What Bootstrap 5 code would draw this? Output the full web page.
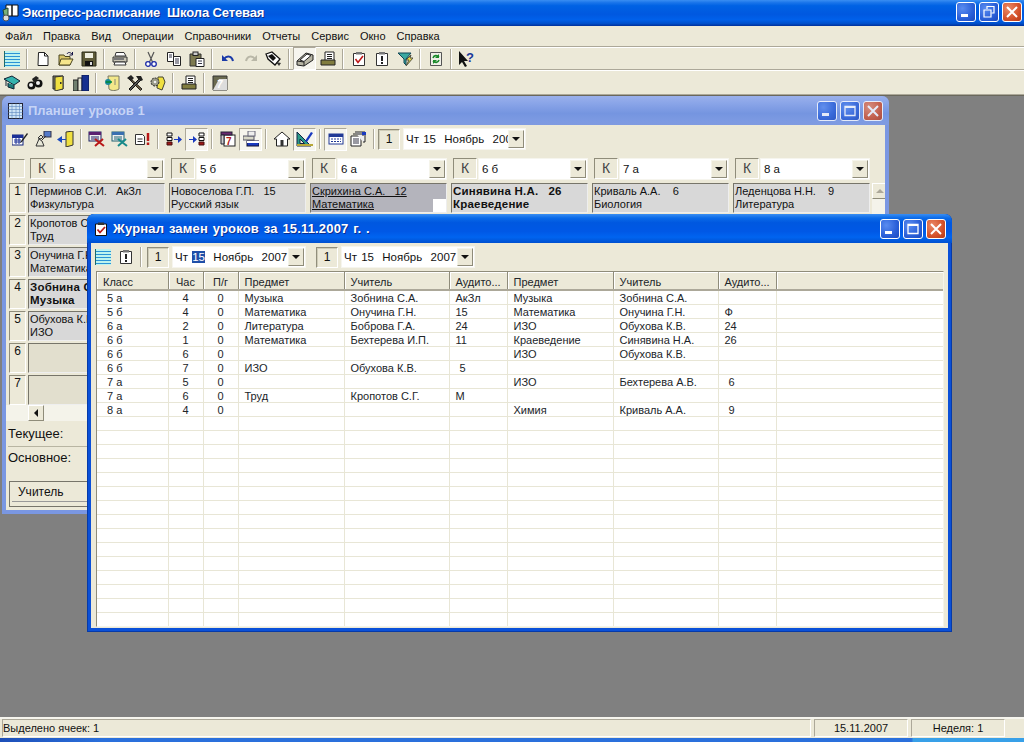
<!DOCTYPE html>
<html lang="ru">
<head>
<meta charset="utf-8">
<title>Экспресс-расписание</title>
<link href="https://cdn.jsdelivr.net/npm/bootstrap@5.3.0/dist/css/bootstrap.min.css" rel="stylesheet">
<style>
html,body{height:742px;overflow:hidden}
body{font:11px/14px "Liberation Sans",Arial,sans-serif;color:#111;background:#ece9d8}
.app{height:742px}
.apptitle{height:26px;background:linear-gradient(#3a8ef2 0,#1a75ea 10%,#0062e4 22%,#0058e0 55%,#0060ea 75%,#0050cc 90%,#00309a 100%);color:#fff;font-weight:700;font-size:13px;letter-spacing:-.12px;text-shadow:1px 1px 0 #0a2f90;white-space:pre}
.apptitle svg{margin:0 2px 0 2px}
.appbtns{padding-right:2px;margin-bottom:2px}
.menubar{height:21px;padding-left:5px;gap:11px;font-size:11px;border-bottom:1px solid #aca899}
.tbar{height:23px;border-top:1px solid #fff;border-bottom:1px solid #aca899}
.tbar+.tbar{height:25px}
.tbar.wtb{height:28px;border:0;padding-left:2px}
.tbar.wtb2{height:28px;padding-left:0}
.tbtn{width:23px;height:23px;flex:none;display:flex;align-items:center;justify-content:center}
.tbtn.on{background:#f6f5ee;border:1px solid;border-color:#aca899 #fff #fff #aca899}
.tsep{width:8px;height:20px;flex:none;display:flex;justify-content:center}
.tsep::before{content:"";width:2px;height:100%;border-left:1px solid #aca899;border-right:1px solid #fff}
.desktop{flex:1 1 auto;background:#808080;border-top:1px solid #6a685c;overflow:hidden}
.wnd{position:absolute;border-radius:7px 7px 0 0;padding:0 4px 4px}
.w1{left:2px;top:0;width:887px;height:418px;background:#7a97e2}
.w2{left:87px;top:118px;width:865px;height:418px;background:#0a50d8;box-shadow:inset 0 0 0 1px #063aa8}
.wt{margin:0 -4px;padding:0 6px;font-weight:700;font-size:13px;border-radius:7px 7px 0 0}
.w1 .wt{height:29px;background:linear-gradient(#9ab0ec 0,#8aa5e8 25%,#7595e0 60%,#7c9ae2 85%,#7f9ae0);color:#c6d4f6}
.w2 .wt{height:29px;letter-spacing:.17px;word-spacing:1px;background:linear-gradient(#3a8ef2 0,#0a6ae8 14%,#0058e0 30%,#0058e6 60%,#0064f0 80%,#0050d0 100%);color:#fff;text-shadow:1px 1px 0 #0a2f90}
.wtico{margin:0 5px 0 1px}
.client{background:#ece9d8;overflow:hidden}
.w1 .client{height:385px}
.w2 .client{height:385px}
.xb{width:20px;height:20px;border:1px solid #fff;border-radius:3px;flex:none;background:radial-gradient(circle at 30% 30%,#5a8cf0,#2a5fd8 60%,#1c49bd);display:flex;align-items:center;justify-content:center}
.xb.cl{background:radial-gradient(circle at 30% 30%,#ea8a68,#d4512a 60%,#b53a18)}
.w1 .xb{opacity:.8}
.xb+.xb{margin-left:3px}
.numbox{width:22px;height:21px;flex:none;border:1px solid;border-color:#918e7c #fff #fff #918e7c;box-shadow:inset 1px 1px 0 #cfccb8;font-size:12px;line-height:19px;text-align:center}
.combo{height:22px;background:#fff;border:1px solid #f6f5ee;font-size:11.5px;white-space:pre;overflow:hidden;padding-left:2px;margin-left:3px}
.combo .val{flex:1 1 auto;overflow:hidden;word-spacing:1px}
.dw1{width:123px}
.dw2{width:134px}
.numbox.next{margin-left:10px}
.numbox.first{margin-left:2px}
.arrow{width:16px;height:18px;flex:none;background:#ece9d8;border:1px solid;border-color:#f5f4ea #8f8c7a #8f8c7a #f5f4ea;display:flex;align-items:center;justify-content:center;margin-right:1px}
.arrow::before{content:"";border:4px solid transparent;border-top:4px solid #111;border-bottom:0}
.sel{background:#1f4fa8;color:#fff}
.krow{height:25px;padding-left:3px;margin-top:3px}
.blankbox{width:16px;height:19px;flex:none;margin-right:5px;border:1px solid;border-color:#8f8c7a #fff #fff #8f8c7a}
.kcell{width:141px;flex:none}
.kbox{width:24px;height:21px;flex:none;margin-right:1px;border:1px solid;border-color:#8f8c7a #fff #fff #8f8c7a;font-size:14px;color:#444;line-height:19px;text-align:center}
.kcell .combo{width:110px;flex:none;margin-left:0;padding-left:3px}
.kcell .val{word-spacing:0}
.rowsarea{height:222px;overflow:hidden;padding-left:3px;margin-top:2px}
.rowscol{width:863px}
.lrow{height:32px;flex:none}
.rnum{width:17px;height:30px;flex:none;margin-right:2px;border:1px solid;border-color:#8f8c7a #fff #fff #8f8c7a;font-size:12px;line-height:14px;text-align:center}
.cellx{width:137px;height:30px;flex:none;margin-right:4px;background:#d8d8d8;border:1px solid;border-color:#77756a #eee #eee #77756a;padding:1px 0 0 1px;position:relative;font-size:11px;line-height:13px;white-space:pre}
.cellx.cur{background:#b4b4bc;text-decoration:underline}
.cellx.cur::after{content:"";position:absolute;right:0;bottom:0;width:13px;height:13px;background:#fff}
.cellx.bold{font-weight:700;font-size:11.5px;letter-spacing:.2px}
.cellx.empty{background:#e2dfce}
.sbv{width:16px;height:222px;flex:none;background:#f4f3ea}
.sbb{width:16px;height:16px;flex:none;background:#ece9d8;border:1px solid;border-color:#fff #8f8c7a #8f8c7a #fff;display:flex;align-items:center;justify-content:center}
.sbup::before{content:"";border:4px solid transparent;border-bottom:4px solid #aca899;border-top:0}
.sbl::before{content:"";border:4px solid transparent;border-right:4px solid #111;border-left:0}
.hsb{height:16px;padding-left:22px;background:#f4f3ea;margin-bottom:5px}
.lbl{font-size:13px;line-height:16px;padding-left:2px;height:20px}
.lbl+.lbl{border-top:1px solid #b8b5a2;padding-top:3px;margin-left:2px;padding-left:0;height:24px}
.tinybox{margin:11px 0 0 3px;border:1px solid #77756a;border-bottom:1px solid #77756a;padding:1px 2px;height:26px;font-size:12px;overflow:hidden}
.tinyhead{height:19px;padding-left:6px;line-height:18px;border-bottom:1px solid #999}
.gridwrap{margin:0 0 0 5px;width:848px;height:356px;background:#fff;border:1px solid;border-color:#8f8c7a #f5f4ea #f5f4ea #8f8c7a;overflow:hidden}
table.jt{table-layout:fixed;width:847px;margin:0;border-collapse:collapse;--bs-table-bg:transparent}
.jt col:nth-child(1){width:71px}
.jt col:nth-child(2),.jt col:nth-child(3){width:35px}
.jt col:nth-child(4){width:106px}
.jt col:nth-child(5){width:105px}
.jt col:nth-child(6),.jt col:nth-child(9){width:58px}
.jt col:nth-child(7){width:106px}
.jt col:nth-child(8){width:105px}
.jt th{height:18px;padding:0 0 0 6px;background:#ece9d8;font-weight:400;border:0;border-right:1px solid #8f8c7a;border-bottom:2px solid #aca899;box-shadow:inset 1px 1px 0 #fff;font-size:11px;white-space:nowrap;overflow:hidden}
.jt th:last-child{border-right:0}
.jt td{height:14px;padding:1px 0 0 6px;line-height:12px;border:0;border-right:1px solid #e8e6d6;border-bottom:1px solid #e8e6d6;font-size:11px;white-space:pre;overflow:hidden}
.jt td.ct{text-align:center;padding-left:0}
.jt th.ct{padding:0;text-align:center}
.jt td.ins{padding-left:10px}
.stbar{height:21px;border-top:2px solid #f6f5ee;padding:0 0 0 2px}
.sp{height:18px;border:1px solid;border-color:#aca899 #fff #fff #aca899;margin-right:3px;line-height:17px;font-size:11px}
.sp1{width:809px}
.sp2{width:94px;text-align:center}
.taskb{height:4px;background:linear-gradient(90deg,#1d4fb8 0,#2a70dc 10%,#2a70dc 89%,#38a0e8 89.2%);flex:none}
</style>
</head>
<body>
<svg width="0" height="0" class="position-absolute">
<defs>
<symbol id="list" viewBox="0 0 16 16"><rect x="1" y="0" width="15" height="16" fill="#bdf3ee"/><path d="M1 2.500h15M1 5.500h15M1 8.500h15M1 11.500h15M1 14.500h15" stroke="#2b93d6"/><path d="M.5 0v16" stroke="#1d6a6a"/></symbol>
<symbol id="new" viewBox="0 0 16 16"><path d="M3.500 1.500h6l3.500 3.500v9.500h-10z" fill="#fff" stroke="#222"/><path d="M9.500 1.500v3.500h3.500" fill="none" stroke="#222"/></symbol>
<symbol id="open" viewBox="0 0 16 16"><path d="M1 4h5l1 1.500h5V14H1z" fill="#d9c76a" stroke="#4a4520"/><path d="M3 8h12l-3 6H1z" fill="#f6e68c" stroke="#4a4520"/><path d="M9 3c1-2 3-2 5 0" fill="none" stroke="#114"/><path d="M14.500 1v3h-3" fill="none" stroke="#114"/></symbol>
<symbol id="save" viewBox="0 0 16 16"><path d="M1 1h14v14H1z" fill="#5d5a38" stroke="#2b2a18"/><rect x="4" y="2" width="8" height="5" fill="#eeeee0"/><rect x="4" y="10" width="8" height="5" fill="#111"/><rect x="9" y="11" width="2" height="3" fill="#ddd"/></symbol>
<symbol id="print" viewBox="0 0 16 16"><path d="M4 1.500h8l2 3.500H3z" fill="#fff" stroke="#333"/><path d="M1 6h14v5H1z" fill="#c9c6b6" stroke="#333"/><path d="M3 11h10l1 3H2z" fill="#fff" stroke="#333"/><path d="M2 8h10" stroke="#777" stroke-width="2"/></symbol>
<symbol id="cut" viewBox="0 0 16 16"><path d="M5 1l4.500 10M11 1L6.500 11" stroke="#555" stroke-width="1.200" fill="none"/><circle cx="5" cy="13" r="2.300" fill="#fff" stroke="#1b2aa8" stroke-width="1.300"/><circle cx="11" cy="13" r="2.300" fill="#fff" stroke="#1b2aa8" stroke-width="1.300"/></symbol>
<symbol id="copy" viewBox="0 0 16 16"><path d="M1.500 1.500h6v9h-6z" fill="#fff" stroke="#222"/><path d="M7.500 5.500h7v9h-7z" fill="#fff" stroke="#222"/><path d="M3 4h3M3 6h3M9 8h4M9 10h4M9 12h4" stroke="#334"/></symbol>
<symbol id="paste" viewBox="0 0 16 16"><path d="M1 3h11v12H1z" fill="#7d7a50" stroke="#333"/><rect x="4" y="1" width="5" height="3.500" fill="#ccc" stroke="#222"/><path d="M7 7.500h8v8H7z" fill="#fff" stroke="#222"/><path d="M9 10h4M9 12.500h4" stroke="#334"/></symbol>
<symbol id="undo" viewBox="0 0 16 16"><path d="M4 8c3-4 8-3 9 2" fill="none" stroke="#1b3aa8" stroke-width="2"/><path d="M2 4v6h6z" fill="#1b3aa8"/></symbol>
<symbol id="redo" viewBox="0 0 16 16"><path d="M12 8c-3-4-8-3-9 2" fill="none" stroke="#b9b7a7" stroke-width="2"/><path d="M14 4v6H8z" fill="#b9b7a7"/></symbol>
<symbol id="brush" viewBox="0 0 18 16"><path d="M1 3l6-2 8 7-5 6-7-6z" fill="#fff" stroke="#111" stroke-width="1.300"/><path d="M3 5l4-2 4 4-3 3z" fill="#111"/><path d="M11 11l5 1-2 3z" fill="#333"/></symbol>
<symbol id="stamp" viewBox="0 0 18 16"><path d="M1 10l9-8 7 2v5l-9 6-7-1z" fill="#b7b5a4" stroke="#222"/><path d="M4 9l7-6 4 1.500-7 6z" fill="#fff" stroke="#222"/><path d="M1 10l7 1v4" fill="none" stroke="#222"/></symbol>
<symbol id="tray" viewBox="0 0 16 16"><path d="M5 1h9v9H5z" fill="#fff" stroke="#222"/><path d="M7 3.500h5M7 5.500h5M7 7.500h5" stroke="#222"/><path d="M1 9h14v5H1z" fill="#807c3e" stroke="#222"/></symbol>
<symbol id="chk" viewBox="0 0 16 16"><path d="M2.500 2.500h11v12h-11z" fill="#fff" stroke="#333"/><rect x="5" y="1" width="6" height="2.500" fill="#777"/><path d="M4.500 8l2.500 3.500L12 5" fill="none" stroke="#c01818" stroke-width="1.600"/></symbol>
<symbol id="exc" viewBox="0 0 16 16"><path d="M2.500 2.500h11v12h-11z" fill="#fff" stroke="#333"/><rect x="5" y="1" width="6" height="2.500" fill="#777"/><path d="M8 5v5" stroke="#222" stroke-width="2"/><path d="M8 11v2" stroke="#222" stroke-width="2"/></symbol>
<symbol id="filt" viewBox="0 0 16 16"><path d="M1 2h13L9 8v6l-2-2V8z" fill="#3aa8a0" stroke="#145"/><path d="M14 4L9 9l3 0-3 6 7-8h-3z" fill="#e8d84a" stroke="#554"/></symbol>
<symbol id="sync" viewBox="0 0 16 16"><path d="M2.500 1.500h11v13h-11z" fill="#f0f0e8" stroke="#555"/><path d="M5 7c1-3 4-3 6-1" fill="none" stroke="#1a8a2a" stroke-width="1.600"/><path d="M11 3v4H7z" fill="#1a8a2a"/><path d="M11 9c-1 3-4 3-6 1" fill="none" stroke="#1a8a2a" stroke-width="1.600"/><path d="M5 13V9h4z" fill="#1a8a2a"/></symbol>
<symbol id="cap" viewBox="0 0 18 16"><path d="M1 4l8-3 8 5-6 4z" fill="#35b3ae" stroke="#123"/><path d="M5 8v4l6 2V10" fill="#1a7c7a" stroke="#123"/><path d="M3 5v6" stroke="#123"/></symbol>
<symbol id="bino" viewBox="0 0 16 16"><circle cx="4.500" cy="10.500" r="4" fill="#111"/><circle cx="11.500" cy="8.500" r="4" fill="#111"/><circle cx="4" cy="10" r="2" fill="#eee"/><circle cx="11" cy="8" r="2" fill="#eee"/><path d="M5 4l4-3 3 2-5 5z" fill="#222"/></symbol>
<symbol id="door" viewBox="0 0 16 16"><path d="M3 1h10v13H3z" fill="#80806a" stroke="#222"/><path d="M5 2l8-1v13l-8 2z" fill="#f0e040" stroke="#333"/><rect x="10" y="7" width="1.500" height="2" fill="#333"/></symbol>
<symbol id="books" viewBox="0 0 16 16"><rect x="0" y="5" width="5" height="11" fill="#6f7f6f" stroke="#222"/><rect x="5" y="3" width="4" height="13" fill="#e8e8d8" stroke="#222"/><rect x="9" y="0" width="7" height="16" fill="#16308f" stroke="#0a1a55"/></symbol>
<symbol id="note" viewBox="0 0 16 16"><path d="M4 1h11v13c-3 2-8 2-10 0z" fill="#f3e88a" stroke="#776"/><circle cx="4" cy="7" r="3" fill="#1a8a9a"/><path d="M8 7H2" stroke="#083" stroke-width="1.500"/><path d="M11 4v6" stroke="#887"/></symbol>
<symbol id="tools" viewBox="0 0 16 16"><path d="M3 3l12 11-1.500 1.500L2 4z" fill="#6a5a40" stroke="#222"/><path d="M13 3L2 14l1.500 1.500L15 4z" fill="#555" stroke="#111"/><path d="M0 3l4-3 3 3-3 3zM9 1h5l2 4-2 1-3-2z" fill="#222"/></symbol>
<symbol id="gear" viewBox="0 0 16 16"><path d="M8 2h5l2 5-3 8-5-2z" fill="#f0e040" stroke="#443"/><circle cx="5" cy="7" r="4" fill="#9a9a8a" stroke="#222" stroke-dasharray="2 1"/><circle cx="5" cy="7" r="1.300" fill="#eee"/></symbol>
<symbol id="page7" viewBox="0 0 16 16"><path d="M1 1h14v14H1z" fill="#6a6a50" stroke="#333"/><path d="M1 15L7 4h8v11z" fill="#ddd"/><text x="5" y="13" font-family="Liberation Sans" font-size="10" font-weight="700" font-style="italic" fill="#fff">7</text></symbol>
<symbol id="tabpen" viewBox="0 0 16 16"><rect x="0" y="4" width="11" height="10" fill="#fff" stroke="#11237a"/><rect x="0" y="4" width="11" height="3" fill="#1b2f96"/><path d="M2 9h7M2 11h7M4 7v6M7 7v6" stroke="#1b2f96"/><path d="M9 10l6-8 1 1-6 8-2 1z" fill="#222"/></symbol>
<symbol id="net" viewBox="0 0 18 16"><rect x="10" y="0" width="7" height="6" fill="#557ac8" stroke="#334"/><path d="M2 15l3-7 3 2 2 5zM4 7l3-3 2 2-2 2z" fill="#e8e8d8" stroke="#333"/><path d="M8 9l4-4" stroke="#333"/></symbol>
<symbol id="dooarr" viewBox="0 0 18 16"><path d="M9 1l7-1v14l-7 2z" fill="#f0e040" stroke="#333"/><path d="M9 8H5V5L0 8.500 5 12V9h4z" fill="#1a4ac0"/></symbol>
<symbol id="xred" viewBox="0 0 18 16"><rect x="1" y="1" width="12" height="9" fill="#eee" stroke="#1b2060"/><rect x="1" y="1" width="12" height="3" fill="#5a2070"/><path d="M3 6h8M3 8h8" stroke="#226"/><path d="M7 8l9 7M15 8l-8 7" stroke="#b81818" stroke-width="2"/></symbol>
<symbol id="xteal" viewBox="0 0 18 16"><rect x="1" y="1" width="12" height="9" fill="#eee" stroke="#206070"/><rect x="1" y="1" width="12" height="3" fill="#3a70b0"/><path d="M3 6h8M3 8h8" stroke="#267"/><path d="M7 8l9 7M15 8l-8 7" stroke="#188a8a" stroke-width="2"/></symbol>
<symbol id="docb" viewBox="0 0 18 16"><path d="M1.500 3.500h7l2 2v8h-9z" fill="#fff" stroke="#333"/><path d="M3.500 8h5M3.500 10.500h5" stroke="#333"/><path d="M14 2v8" stroke="#b81818" stroke-width="2.500"/><path d="M14 11.500v2.500" stroke="#b81818" stroke-width="2.500"/></symbol>
<symbol id="arr1" viewBox="0 0 16 16"><path d="M1 2h5v3H1zM1 6.500h5v3H1z" fill="#fff" stroke="#111"/><path d="M1 11h5v3H1z" fill="#a01818" stroke="#411"/><path d="M8 8h4V5l4 3.500L12 12V9H8z" fill="#1a3ac0"/></symbol>
<symbol id="arr2" viewBox="0 0 16 16"><path d="M10 2h5v3h-5zM10 6.500h5v3h-5z" fill="#fff" stroke="#111"/><path d="M10 11h5v3h-5z" fill="#a01818" stroke="#411"/><path d="M0 8h4V5l4 3.500L4 12V9H0z" fill="#1a3ac0"/></symbol>
<symbol id="cal7" viewBox="0 0 16 16"><rect x="4" y="4" width="11" height="11" fill="#fff" stroke="#222"/><rect x="1" y="1" width="11" height="3" fill="#6a2a70" stroke="#223"/><path d="M1 4h3v9H1z" fill="#ccc" stroke="#223"/><text x="6" y="13.500" font-family="Liberation Sans" font-size="10" font-weight="700" fill="#b01818">7</text></symbol>
<symbol id="wins" viewBox="0 0 16 16"><rect x="0" y="5" width="11" height="4" fill="#d8d8c8" stroke="#556"/><rect x="5" y="0" width="7" height="5" fill="#eee" stroke="#667"/><rect x="4" y="10" width="12" height="5" fill="#1a3ac0" stroke="#113"/><rect x="4" y="10" width="12" height="2" fill="#fff"/></symbol>
<symbol id="home" viewBox="0 0 16 16"><path d="M8 1L0 8h2.500v7h11V8H16z" fill="#fff" stroke="#222"/><rect x="6.500" y="9" width="3" height="6" fill="#333"/></symbol>
<symbol id="ruler" viewBox="0 0 18 16"><path d="M1 1v14h14z" fill="#2a9a88" stroke="#124"/><path d="M4 8v4.500h4.500z" fill="#ece9d8" stroke="#124"/><path d="M9 10l6-9 2 1-6 9z" fill="#1a3ac0"/><path d="M1 13h16v2H1z" fill="#b8a838"/></symbol>
<symbol id="cals" viewBox="0 0 16 16"><rect x="1" y="3" width="14" height="10" fill="#fff" stroke="#223a96"/><rect x="1" y="3" width="14" height="3" fill="#223a96"/><path d="M3 8h10M3 10.500h10" stroke="#223a96" stroke-dasharray="2 1"/></symbol>
<symbol id="props" viewBox="0 0 18 16"><path d="M1 5h10v10H1z" fill="#fff" stroke="#222"/><path d="M3 3h10v2M5 1h10v10h-2" fill="#eee" stroke="#222"/><path d="M3 8h6M3 10h6M3 12h6" stroke="#334"/><rect x="12" y="1" width="4" height="3" fill="#1a3ac0"/></symbol>
<symbol id="hlp" viewBox="0 0 18 16"><path d="M1 0v14l3-3 3 5 2-1-3-5h4z" fill="#111"/><text x="8" y="11" font-family="Liberation Sans" font-size="13" font-weight="700" fill="#1a3a9a">?</text></symbol>
<symbol id="bookapp" viewBox="0 0 18 18"><path d="M4 1h6v11H4zM10 1h6v11h-6z" fill="#fff" stroke="#111"/><path d="M1 6l5-2v9l-3 3z" fill="#7ab07a" stroke="#243"/><circle cx="4" cy="14" r="3" fill="#dcdcdc" stroke="#555"/></symbol>
<symbol id="tabico" viewBox="0 0 16 16"><rect x=".5" y=".5" width="14" height="15" fill="#cfe4f6" stroke="#223"/><path d="M.5 3.500h14M.5 6.500h14M.5 9.500h14M.5 12.500h14M4 .5v15M8 .5v15M11.500 .5v15" stroke="#5a86c0" stroke-width=".6"/></symbol>
<symbol id="wchk" viewBox="0 0 14 14"><path d="M1.500 2h11v11.500h-11z" fill="#fff" stroke="#111"/><rect x="4" y=".5" width="6" height="2.500" fill="#333"/><path d="M3.500 7.500l2.500 3L11 5" fill="none" stroke="#b81818" stroke-width="1.800"/></symbol>
<symbol id="xmin" viewBox="0 0 14 14"><rect x="2" y="9" width="7" height="3" fill="#fff"/></symbol>
<symbol id="xmax" viewBox="0 0 14 14"><path d="M2 2.500h10v9H2z" fill="none" stroke="#fff" stroke-width="1.300"/><path d="M2 3h10" stroke="#fff" stroke-width="2"/></symbol>
<symbol id="xres" viewBox="0 0 14 14"><path d="M5 4V1.500h7v6.500H9.500" fill="none" stroke="#fff" stroke-width="1.200"/><path d="M2 5h7v7H2z" fill="none" stroke="#fff" stroke-width="1.200"/></symbol>
<symbol id="xcls" viewBox="0 0 14 14"><path d="M2 2l10 10M12 2L2 12" stroke="#fff" stroke-width="2"/></symbol>
</defs>
</svg>

<div class="app d-flex flex-column">
  <div class="apptitle d-flex align-items-center flex-shrink-0">
    <svg width="18" height="18"><use href="#bookapp"/></svg>
    <span class="flex-grow-1">Экспресс-расписание  Школа Сетевая</span>
    <span class="d-flex appbtns"><span class="xb"><svg width="14" height="14"><use href="#xmin"/></svg></span><span class="xb"><svg width="14" height="14"><use href="#xres"/></svg></span><span class="xb cl"><svg width="14" height="14"><use href="#xcls"/></svg></span></span>
  </div>
  <nav class="menubar d-flex align-items-center flex-shrink-0"><span>Файл</span><span>Правка</span><span>Вид</span><span>Операции</span><span>Справочники</span><span>Отчеты</span><span>Сервис</span><span>Окно</span><span>Справка</span></nav>
  <div class="tbar d-flex align-items-center flex-shrink-0">
    <span class="tbtn"><svg width="16" height="16"><use href="#list"/></svg></span><span class="tsep"></span>
    <span class="tbtn"><svg width="16" height="16"><use href="#new"/></svg></span><span class="tbtn"><svg width="16" height="16"><use href="#open"/></svg></span><span class="tbtn"><svg width="16" height="16"><use href="#save"/></svg></span><span class="tsep"></span>
    <span class="tbtn"><svg width="16" height="16"><use href="#print"/></svg></span><span class="tsep"></span>
    <span class="tbtn"><svg width="16" height="16"><use href="#cut"/></svg></span><span class="tbtn"><svg width="16" height="16"><use href="#copy"/></svg></span><span class="tbtn"><svg width="16" height="16"><use href="#paste"/></svg></span><span class="tsep"></span>
    <span class="tbtn"><svg width="16" height="16"><use href="#undo"/></svg></span><span class="tbtn"><svg width="16" height="16"><use href="#redo"/></svg></span><span class="tbtn"><svg width="18" height="16"><use href="#brush"/></svg></span><span class="tsep"></span>
    <span class="tbtn on"><svg width="18" height="16"><use href="#stamp"/></svg></span><span class="tbtn"><svg width="16" height="16"><use href="#tray"/></svg></span><span class="tsep"></span>
    <span class="tbtn"><svg width="16" height="16"><use href="#chk"/></svg></span><span class="tbtn"><svg width="16" height="16"><use href="#exc"/></svg></span><span class="tbtn"><svg width="16" height="16"><use href="#filt"/></svg></span><span class="tsep"></span>
    <span class="tbtn"><svg width="16" height="16"><use href="#sync"/></svg></span><span class="tsep"></span>
    <span class="tbtn"><svg width="18" height="16"><use href="#hlp"/></svg></span>
  </div>
  <div class="tbar d-flex align-items-center flex-shrink-0">
    <span class="tbtn"><svg width="18" height="16"><use href="#cap"/></svg></span><span class="tbtn"><svg width="16" height="16"><use href="#bino"/></svg></span><span class="tbtn"><svg width="16" height="16"><use href="#door"/></svg></span><span class="tbtn"><svg width="16" height="16"><use href="#books"/></svg></span><span class="tsep"></span>
    <span class="tbtn"><svg width="16" height="16"><use href="#note"/></svg></span><span class="tbtn"><svg width="16" height="16"><use href="#tools"/></svg></span><span class="tbtn"><svg width="16" height="16"><use href="#gear"/></svg></span><span class="tsep"></span>
    <span class="tbtn"><svg width="16" height="16"><use href="#tray"/></svg></span><span class="tsep"></span>
    <span class="tbtn"><svg width="16" height="16"><use href="#page7"/></svg></span>
  </div>

  <div class="desktop position-relative">
    <section class="wnd w1">
      <div class="wt d-flex align-items-center">
        <svg width="16" height="16" class="me-1"><use href="#tabico"/></svg>
        <span class="flex-grow-1">Планшет уроков 1</span>
        <span class="d-flex"><span class="xb"><svg width="14" height="14"><use href="#xmin"/></svg></span><span class="xb"><svg width="14" height="14"><use href="#xmax"/></svg></span><span class="xb cl"><svg width="14" height="14"><use href="#xcls"/></svg></span></span>
      </div>
      <div class="client">
        <div class="tbar wtb d-flex align-items-center">
          <span class="tbtn"><svg width="16" height="16"><use href="#tabpen"/></svg></span><span class="tbtn"><svg width="18" height="16"><use href="#net"/></svg></span><span class="tbtn"><svg width="18" height="16"><use href="#dooarr"/></svg></span><span class="tsep"></span>
          <span class="tbtn"><svg width="18" height="16"><use href="#xred"/></svg></span><span class="tbtn"><svg width="18" height="16"><use href="#xteal"/></svg></span><span class="tbtn"><svg width="18" height="16"><use href="#docb"/></svg></span><span class="tsep"></span>
          <span class="tbtn"><svg width="16" height="16"><use href="#arr1"/></svg></span><span class="tbtn on"><svg width="16" height="16"><use href="#arr2"/></svg></span><span class="tsep"></span>
          <span class="tbtn"><svg width="16" height="16"><use href="#cal7"/></svg></span><span class="tbtn on"><svg width="16" height="16"><use href="#wins"/></svg></span><span class="tsep"></span>
          <span class="tbtn"><svg width="16" height="16"><use href="#home"/></svg></span><span class="tbtn on"><svg width="18" height="16"><use href="#ruler"/></svg></span><span class="tsep"></span>
          <span class="tbtn on"><svg width="16" height="16"><use href="#cals"/></svg></span><span class="tbtn"><svg width="18" height="16"><use href="#props"/></svg></span><span class="tsep"></span>
          <span class="numbox">1</span>
          <span class="combo dw1 d-flex align-items-center"><span class="val">Чт 15  Ноябрь  2007</span><span class="arrow"></span></span>
        </div>
        <div class="krow d-flex align-items-center">
          <span class="blankbox"></span>
          <div class="kcell d-flex"><span class="kbox">К</span><span class="combo d-flex align-items-center"><span class="val">5 а</span><span class="arrow"></span></span></div>
          <div class="kcell d-flex"><span class="kbox">К</span><span class="combo d-flex align-items-center"><span class="val">5 б</span><span class="arrow"></span></span></div>
          <div class="kcell d-flex"><span class="kbox">К</span><span class="combo d-flex align-items-center"><span class="val">6 а</span><span class="arrow"></span></span></div>
          <div class="kcell d-flex"><span class="kbox">К</span><span class="combo d-flex align-items-center"><span class="val">6 б</span><span class="arrow"></span></span></div>
          <div class="kcell d-flex"><span class="kbox">К</span><span class="combo d-flex align-items-center"><span class="val">7 а</span><span class="arrow"></span></span></div>
          <div class="kcell d-flex"><span class="kbox">К</span><span class="combo d-flex align-items-center"><span class="val">8 а</span><span class="arrow"></span></span></div>
        </div>
        <div class="d-flex rowsarea">
          <div class="d-flex flex-column rowscol">
            <div class="lrow d-flex"><span class="rnum">1</span><div class="cellx">Перминов С.И.   АкЗл
Физкультура</div><div class="cellx">Новоселова Г.П.   15
Русский язык</div><div class="cellx cur">Скрихина С.А.   12
Математика</div><div class="cellx bold">Синявина Н.А.   26
Краеведение</div><div class="cellx">Криваль А.А.    6
Биология</div><div class="cellx">Леденцова Н.Н.    9
Литература</div></div>
            <div class="lrow d-flex"><span class="rnum">2</span><div class="cellx">Кропотов С.Г.
Труд</div></div>
            <div class="lrow d-flex"><span class="rnum">3</span><div class="cellx">Онучина Г.Н.
Математика</div></div>
            <div class="lrow d-flex"><span class="rnum">4</span><div class="cellx bold">Зобнина С.А.
Музыка</div></div>
            <div class="lrow d-flex"><span class="rnum">5</span><div class="cellx">Обухова К.В.
ИЗО</div></div>
            <div class="lrow d-flex"><span class="rnum">6</span><div class="cellx empty"></div></div>
            <div class="lrow d-flex"><span class="rnum">7</span><div class="cellx empty"></div></div>
          </div>
          <div class="sbv"><div class="sbb sbup"></div></div>
        </div>
        <div class="hsb d-flex"><span class="sbb sbl"></span></div>
        <div class="lbl">Текущее:</div>
        <div class="lbl">Основное:</div>
        <div class="tinybox"><div class="tinyhead">Учитель</div></div>
      </div>
    </section>

    <section class="wnd w2">
      <div class="wt d-flex align-items-center">
        <svg width="14" height="14" class="wtico"><use href="#wchk"/></svg>
        <span class="flex-grow-1">Журнал замен уроков за 15.11.2007 г. .</span>
        <span class="d-flex"><span class="xb"><svg width="14" height="14"><use href="#xmin"/></svg></span><span class="xb"><svg width="14" height="14"><use href="#xmax"/></svg></span><span class="xb cl"><svg width="14" height="14"><use href="#xcls"/></svg></span></span>
      </div>
      <div class="client">
        <div class="tbar wtb wtb2 d-flex align-items-center">
          <span class="tbtn"><svg width="16" height="16"><use href="#list"/></svg></span><span class="tbtn"><svg width="16" height="16"><use href="#exc"/></svg></span><span class="tsep"></span>
          <span class="numbox first">1</span>
          <span class="combo dw2 d-flex align-items-center"><span class="val">Чт <span class="sel">15</span>  Ноябрь  2007</span><span class="arrow"></span></span>
          <span class="numbox next">1</span>
          <span class="combo dw2 d-flex align-items-center"><span class="val">Чт 15  Ноябрь  2007</span><span class="arrow"></span></span>
        </div>
        <div class="gridwrap">
          <table class="table jt">
            <colgroup><col><col><col><col><col><col><col><col><col><col></colgroup>
            <thead><tr><th>Класс</th><th class="ct">Час</th><th class="ct">П/г</th><th>Предмет</th><th>Учитель</th><th>Аудито...</th><th>Предмет</th><th>Учитель</th><th>Аудито...</th><th></th></tr></thead>
            <tbody>
<tr><td class="ins">5 а</td><td class="ct">4</td><td class="ct">0</td><td>Музыка</td><td>Зобнина С.А.</td><td>АкЗл</td><td>Музыка</td><td>Зобнина С.А.</td><td></td><td></td></tr>
<tr><td class="ins">5 б</td><td class="ct">4</td><td class="ct">0</td><td>Математика</td><td>Онучина Г.Н.</td><td>15</td><td>Математика</td><td>Онучина Г.Н.</td><td>Ф</td><td></td></tr>
<tr><td class="ins">6 а</td><td class="ct">2</td><td class="ct">0</td><td>Литература</td><td>Боброва Г.А.</td><td>24</td><td>ИЗО</td><td>Обухова К.В.</td><td>24</td><td></td></tr>
<tr><td class="ins">6 б</td><td class="ct">1</td><td class="ct">0</td><td>Математика</td><td>Бехтерева И.П.</td><td>11</td><td>Краеведение</td><td>Синявина Н.А.</td><td>26</td><td></td></tr>
<tr><td class="ins">6 б</td><td class="ct">6</td><td class="ct">0</td><td></td><td></td><td></td><td>ИЗО</td><td>Обухова К.В.</td><td></td><td></td></tr>
<tr><td class="ins">6 б</td><td class="ct">7</td><td class="ct">0</td><td>ИЗО</td><td>Обухова К.В.</td><td class="ins">5</td><td></td><td></td><td></td><td></td></tr>
<tr><td class="ins">7 а</td><td class="ct">5</td><td class="ct">0</td><td></td><td></td><td></td><td>ИЗО</td><td>Бехтерева А.В.</td><td class="ins">6</td><td></td></tr>
<tr><td class="ins">7 а</td><td class="ct">6</td><td class="ct">0</td><td>Труд</td><td>Кропотов С.Г.</td><td>М</td><td></td><td></td><td></td><td></td></tr>
<tr><td class="ins">8 а</td><td class="ct">4</td><td class="ct">0</td><td></td><td></td><td></td><td>Химия</td><td>Криваль А.А.</td><td class="ins">9</td><td></td></tr>
<tr><td></td><td></td><td></td><td></td><td></td><td></td><td></td><td></td><td></td><td></td></tr>
<tr><td></td><td></td><td></td><td></td><td></td><td></td><td></td><td></td><td></td><td></td></tr>
<tr><td></td><td></td><td></td><td></td><td></td><td></td><td></td><td></td><td></td><td></td></tr>
<tr><td></td><td></td><td></td><td></td><td></td><td></td><td></td><td></td><td></td><td></td></tr>
<tr><td></td><td></td><td></td><td></td><td></td><td></td><td></td><td></td><td></td><td></td></tr>
<tr><td></td><td></td><td></td><td></td><td></td><td></td><td></td><td></td><td></td><td></td></tr>
<tr><td></td><td></td><td></td><td></td><td></td><td></td><td></td><td></td><td></td><td></td></tr>
<tr><td></td><td></td><td></td><td></td><td></td><td></td><td></td><td></td><td></td><td></td></tr>
<tr><td></td><td></td><td></td><td></td><td></td><td></td><td></td><td></td><td></td><td></td></tr>
<tr><td></td><td></td><td></td><td></td><td></td><td></td><td></td><td></td><td></td><td></td></tr>
<tr><td></td><td></td><td></td><td></td><td></td><td></td><td></td><td></td><td></td><td></td></tr>
<tr><td></td><td></td><td></td><td></td><td></td><td></td><td></td><td></td><td></td><td></td></tr>
<tr><td></td><td></td><td></td><td></td><td></td><td></td><td></td><td></td><td></td><td></td></tr>
<tr><td></td><td></td><td></td><td></td><td></td><td></td><td></td><td></td><td></td><td></td></tr>
<tr><td></td><td></td><td></td><td></td><td></td><td></td><td></td><td></td><td></td><td></td></tr>
            </tbody>
          </table>
        </div>
      </div>
    </section>
  </div>

  <div class="stbar d-flex flex-shrink-0">
    <div class="sp sp1">Выделено ячеек: 1</div>
    <div class="sp sp2">15.11.2007</div>
    <div class="sp sp2">Неделя: 1</div>
  </div>
  <div class="taskb"></div>
</div>
</body>
</html>
